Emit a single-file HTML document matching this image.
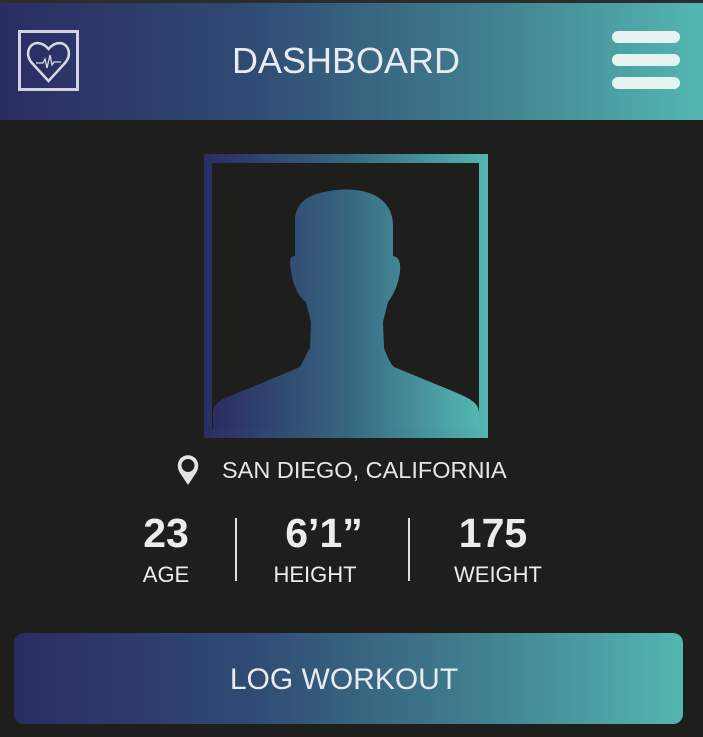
<!DOCTYPE html>
<html><head><style>
body{margin:0;width:703px;height:737px;background:#1e1e1c;position:relative;overflow:hidden;font-family:"Liberation Sans",sans-serif;}
.a{position:absolute}
.g{background:linear-gradient(90deg,#2b2c62 0%,#2f4a73 35%,#41808f 70%,#53b7b1 100%)}
.t{color:#ececec;text-align:center;white-space:nowrap}
</style></head><body>
<div class="a" style="left:0;top:0;width:703px;height:3px;background:#2c2c2c"></div>
<div class="a g" style="left:0;top:3px;width:703px;height:117px"></div>
<div class="a" style="left:18px;top:30px;width:55px;height:55px;border:3px solid #d2d2e2"></div>
<svg class="a" style="left:18px;top:30px" width="61" height="61" viewBox="0 0 61 61"><path d="M30.5 51 L14 33 C7 25 10 14 19 13 C24 13 28 16 30.5 19 C33 16 37 13 42 13 C51 14 54 25 47 33 Z" fill="none" stroke="#d8d8e6" stroke-width="2.5"/><path d="M18 33 H25 L27 29 L29 38 L32 25 L34 35 L36 32 H43" fill="none" stroke="#d8d8e6" stroke-width="1.3"/></svg>
<div class="a t" style="left:180px;top:41px;width:332px;font-size:36px;line-height:40px;color:#e8ecf2">DASHBOARD</div>
<div class="a" style="left:612px;top:31px;width:68px;height:12px;border-radius:6px;background:#e6f2f0"></div>
<div class="a" style="left:612px;top:54px;width:68px;height:12px;border-radius:6px;background:#e6f2f0"></div>
<div class="a" style="left:612px;top:77px;width:68px;height:12px;border-radius:6px;background:#e6f2f0"></div>
<svg class="a" style="left:204px;top:154px" width="284" height="284" viewBox="204 154 284 284">
<defs><linearGradient id="lg" x1="0" x2="1"><stop offset="0" stop-color="#2b2c62"/><stop offset=".5" stop-color="#366580"/><stop offset="1" stop-color="#53b7b1"/></linearGradient></defs>
<path fill-rule="evenodd" fill="url(#lg)" d="M204 154H488V438H204Z M212 163V429H479V163Z"/>
<path fill="url(#lg)" d="M213 429 L213 412 C215 400 225 398 250 388 L300 367 C305 358 307 352 310 348 L311 322 L306 302 C298 296 292 285 290 262 C290 258 292 256 295 256 L295 218 C297 200 312 194 325 192 C340 188 360 189 372 194 C384 199 393 210 393 225 L393 256 C398 257 401 260 400 272 C398 285 394 294 388 302 L383 322 L384 348 C387 356 390 363 394 367 L445 388 C470 398 478 402 479 412 L479 429 Z"/>
</svg>
<svg class="a" style="left:176px;top:454px" width="24" height="32" viewBox="0 0 24 32"><path d="M12 31 L4 19 C1 14 1 9 4 5 C8 0 16 0 20 5 C23 9 23 14 20 19 Z M12 5 A6.5 6.5 0 1 0 12.01 5 Z" fill="#e4e4e4" fill-rule="evenodd"/></svg>
<div class="a t" style="left:222px;top:456px;font-size:23.5px;line-height:28px;color:#e6e6e6">SAN DIEGO, CALIFORNIA</div>
<div class="a t" style="left:106px;top:510px;width:120px;font-size:41px;font-weight:bold;line-height:46px">23</div>
<div class="a t" style="left:106px;top:562px;width:120px;font-size:22px;line-height:26px">AGE</div>
<div class="a" style="left:235px;top:518px;width:2px;height:63px;background:#dedede"></div>
<div class="a t" style="left:254px;top:510px;width:140px;font-size:41px;font-weight:bold;line-height:46px">6’1”</div>
<div class="a t" style="left:245px;top:562px;width:140px;font-size:22px;line-height:26px">HEIGHT</div>
<div class="a" style="left:408px;top:518px;width:2px;height:63px;background:#dedede"></div>
<div class="a t" style="left:423px;top:510px;width:140px;font-size:41px;font-weight:bold;line-height:46px">175</div>
<div class="a t" style="left:428px;top:562px;width:140px;font-size:22px;line-height:26px">WEIGHT</div>
<div class="a g" style="left:14px;top:633px;width:669px;height:91px;border-radius:10px"></div>
<div class="a t" style="left:14px;top:662px;width:660px;font-size:30px;line-height:36px;color:#e8ecf2">LOG WORKOUT</div>
</body></html>
